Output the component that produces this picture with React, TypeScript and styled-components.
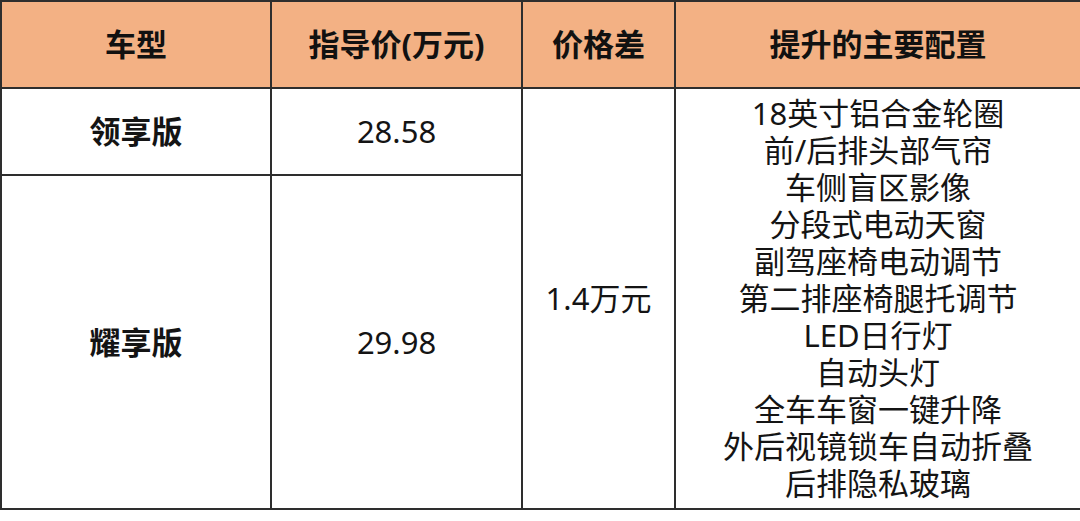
import styled, { createGlobalStyle } from "styled-components";

const GlobalStyle = createGlobalStyle`
  html, body {
    margin: 0;
    padding: 0;
    background: #ffffff;
  }
  body {
    font-family: "Noto Sans", "Noto Sans CJK SC", sans-serif;
    color: #141414;
  }
`;

const features = [
  "18英寸铝合金轮圈",
  "前/后排头部气帘",
  "车侧盲区影像",
  "分段式电动天窗",
  "副驾座椅电动调节",
  "第二排座椅腿托调节",
  "LED日行灯",
  "自动头灯",
  "全车车窗一键升降",
  "外后视镜锁车自动折叠",
  "后排隐私玻璃",
];

const App = () => {
  return (
    <>
      <GlobalStyle />
      <StyledTable>
        <colgroup>
          <col style={{ width: 270 }} />
          <col style={{ width: 251 }} />
          <col style={{ width: 153 }} />
          <col style={{ width: 406 }} />
        </colgroup>
        <thead>
          <HeadRow>
            <HeadCell>车型</HeadCell>
            <HeadCell>指导价(万元)</HeadCell>
            <HeadCell>价格差</HeadCell>
            <HeadCell>提升的主要配置</HeadCell>
          </HeadRow>
        </thead>
        <tbody>
          <BodyRow $height={87}>
            <Cell $bold>领享版</Cell>
            <Cell>28.58</Cell>
            <Cell rowSpan={2}>1.4万元</Cell>
            <Cell rowSpan={2}>
              <FeatureList>
                {features.map((f) => (
                  <li key={f}>{f}</li>
                ))}
              </FeatureList>
            </Cell>
          </BodyRow>
          <BodyRow $height={334}>
            <Cell $bold>耀享版</Cell>
            <Cell>29.98</Cell>
          </BodyRow>
        </tbody>
      </StyledTable>
    </>
  );
};

export default App;

const StyledTable = styled.table`
  width: 1080px;
  border-collapse: collapse;
  table-layout: fixed;
  font-size: 31px;

  td,
  th {
    border: 2px solid #2e2e2e;
    padding: 0;
    text-align: center;
    vertical-align: middle;
  }
`;

const HeadRow = styled.tr`
  height: 87px;
  background: #f3b184;
`;

const HeadCell = styled.th`
  font-weight: 700;
  line-height: 37px;
  color: #111;
`;

const BodyRow = styled.tr<{ $height: number }>`
  height: ${(p) => p.$height}px;
`;

const Cell = styled.td<{ $bold?: boolean }>`
  font-weight: ${(p) => (p.$bold ? 700 : 400)};
  line-height: 37px;
`;

const FeatureList = styled.ul`
  list-style: none;
  margin: 0;
  padding: 0;

  li {
    line-height: 37px;
    white-space: nowrap;
  }
`;
